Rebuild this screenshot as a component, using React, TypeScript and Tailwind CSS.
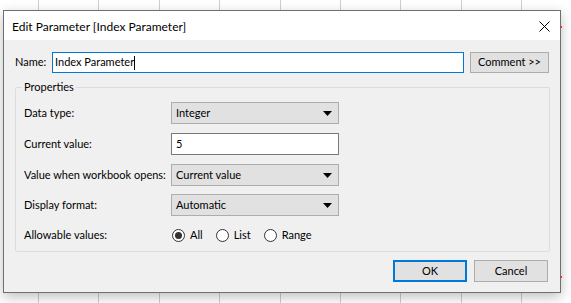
import type { FC } from "react";

const font = { fontFamily: 'Lato, "Noto Sans", sans-serif' };

const Dropdown: FC<{ value: string }> = ({ value }) => (
  <div className="w-[168px] h-[22px] shrink-0 flex items-center justify-between border border-[#adadad] bg-[#e1e1e1] pl-[4px] pr-[6px]">
    <span>{value}</span>
    <svg width="9" height="5" viewBox="0 0 9 5">
      <path d="M0 0H9L4.5 5Z" fill="#000" />
    </svg>
  </div>
);

const Radio: FC<{ label: string; checked?: boolean }> = ({ label, checked }) => (
  <label className="flex items-center gap-[5px]">
    <span className="w-[13px] h-[13px] rounded-full border border-[#333] bg-white flex items-center justify-center">
      {checked && <span className="w-[7px] h-[7px] rounded-full bg-[#333]" />}
    </span>
    <span>{label}</span>
  </label>
);

const Row: FC<{ label: string; children: React.ReactNode }> = ({ label, children }) => (
  <div className="flex items-center h-[22px] whitespace-nowrap">
    <span className="w-[147px] shrink-0">{label}</span>
    {children}
  </div>
);

const App: FC = () => {
  return (
    <div
      className="relative w-[571px] h-[303px] overflow-hidden bg-white bg-[repeating-linear-gradient(90deg,transparent_0px,transparent_38px,#cfcfcf_38px,#cfcfcf_39px,transparent_39px,transparent_60.375px)] pt-[10px] pl-[3px] text-[11px] text-black whitespace-nowrap"
      style={font}
    >
      <span className="absolute left-[560px] top-[26px] w-[2px] h-[2px] bg-[#d04040]" />
      <span className="absolute left-[560px] top-[276px] w-[2px] h-[2px] bg-[#d04040]" />

      <div className="w-[558px] h-[283px] border border-[#6f6f6f] bg-[#f0f0f0] shadow-[0_4px_12px_rgba(0,0,0,0.25)] flex flex-col">
        {/* title bar */}
        <div className="h-[29px] bg-white flex items-center justify-between pl-[8px] pr-[10px] pt-[2px]">
          <span className="text-[12px]">Edit Parameter [Index Parameter]</span>
          <svg width="11" height="11" viewBox="0 0 11 11">
            <path d="M0.5 0.5L10.5 10.5M10.5 0.5L0.5 10.5" stroke="#000" strokeWidth="1" />
          </svg>
        </div>

        <div className="flex flex-col pl-[11px] pr-[11px] pt-[12px]">
          {/* name */}
          <div className="flex items-center h-[21px]">
            <span className="w-[37px] shrink-0">Name:</span>
            <div className="w-[412px] h-[21px] border border-[#0078d7] bg-white flex items-center pl-[2px]">
              <span>Index Parameter</span>
              <span className="w-px h-[14px] bg-black" />
            </div>
            <button className="ml-[6px] w-[79px] h-[21px] border border-[#adadad] bg-[#e1e1e1] flex items-center justify-center">
              Comment &gt;&gt;
            </button>
          </div>

          {/* properties group */}
          <div className="mt-[14px] w-[535px] h-[165px] border border-[#dcdcdc] rounded-[2px] relative pl-[8px] pt-[14px] flex flex-col">
            <span className="absolute -top-[9px] left-[6px] px-[2px] bg-[#f0f0f0]">Properties</span>
            <Row label="Data type:">
              <Dropdown value="Integer" />
            </Row>
            <div className="mt-[9px]">
              <Row label="Current value:">
                <div className="w-[168px] h-[22px] border border-[#7a7a7a] bg-white flex items-center pl-[4px]">5</div>
              </Row>
            </div>
            <div className="mt-[9px]">
              <Row label="Value when workbook opens:">
                <Dropdown value="Current value" />
              </Row>
            </div>
            <div className="mt-[8px]">
              <Row label="Display format:">
                <Dropdown value="Automatic" />
              </Row>
            </div>
            <div className="mt-[8px]">
              <Row label="Allowable values:">
                <div className="flex items-center gap-[13px] pl-[1px]">
                  <Radio label="All" checked />
                  <Radio label="List" />
                  <Radio label="Range" />
                </div>
              </Row>
            </div>
          </div>

          {/* buttons */}
          <div className="mt-[8px] flex justify-end gap-[7px] pr-[1px]">
            <button className="w-[74px] h-[22px] border-2 border-[#0078d7] bg-[#e1e1e1]">OK</button>
            <button className="w-[74px] h-[22px] border border-[#adadad] bg-[#e1e1e1]">Cancel</button>
          </div>
        </div>
      </div>
    </div>
  );
};

export default App;
